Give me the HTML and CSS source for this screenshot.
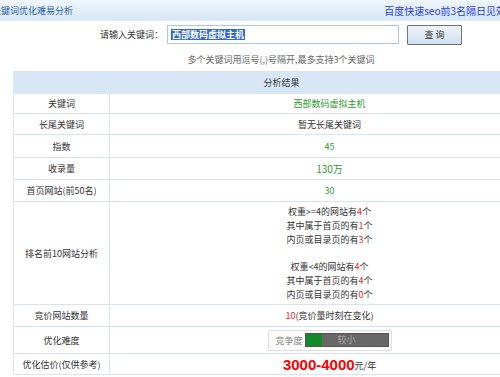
FILE: index.html
```html
<!DOCTYPE html>
<html>
<head>
<meta charset="utf-8">
<link rel="stylesheet" href="styles.css">
</head>
<body>
<div class="topbar">
  <span class="title">关键词优化难易分析</span>
  <a class="promo">百度快速seo前3名隔日见效</a>
</div>
<div class="page">
  <div class="search">
    <span class="label">请输入关键词：</span>
    <div class="input"><span class="sel">西部数码虚拟主机</span></div>
    <button class="btn">查 询</button>
  </div>
  <div class="hint">多个关键词用逗号(,)号隔开,最多支持3个关键词</div>
  <table class="result">
    <colgroup><col class="c1"><col class="c2"></colgroup>
    <tr class="head"><th colspan="2">分析结果</th></tr>
    <tr class="r1"><td class="k">关键词</td><td class="v green">西部数码虚拟主机</td></tr>
    <tr class="r2"><td class="k">长尾关键词</td><td class="v">暂无长尾关键词</td></tr>
    <tr class="r3"><td class="k">指数</td><td class="v green">45</td></tr>
    <tr class="r4"><td class="k">收录量</td><td class="v green">130万</td></tr>
    <tr class="r5"><td class="k">首页网站(前50名)</td><td class="v green">30</td></tr>
    <tr class="r6"><td class="k">排名前10网站分析</td><td class="v lines">
      <div>权重&gt;=4的网站有<span class="red">4</span>个</div>
      <div>其中属于首页的有<span class="red">1</span>个</div>
      <div>内页或目录页的有<span class="red">3</span>个</div>
      <div class="blank"></div>
      <div>权重&lt;4的网站有<span class="red">4</span>个</div>
      <div>其中属于首页的有<span class="red">4</span>个</div>
      <div>内页或目录页的有<span class="red">0</span>个</div>
    </td></tr>
    <tr class="r7"><td class="k">竞价网站数量</td><td class="v"><span class="red">10</span>(竞价量时刻在变化)</td></tr>
    <tr class="r8"><td class="k">优化难度</td><td class="v">
      <div class="meter"><span class="mlabel">竞争度</span><div class="bar"><div class="fill"></div><span class="btext">较小</span></div></div>
    </td></tr>
    <tr class="r9"><td class="k">优化估价(仅供参考)</td><td class="v"><span class="price">3000-4000</span>元/年</td></tr>
  </table>
</div>
</body>
</html>
```
FILE: styles.css
```css
html, body {
  margin: 0;
  padding: 0;
  overflow: hidden;
  background: #fff;
}
body {
  font-family: "Noto Sans CJK SC", "Liberation Sans", sans-serif;
  font-size: 9px;
  color: #333;
  width: 500px;
  height: 377px;
}
.topbar {
  height: 20px;
  display: flex;
  align-items: center;
  justify-content: space-between;
  background: linear-gradient(#f0f6fc, #d5e6f5);
  border-bottom: 1px solid #e3edf7;
  white-space: nowrap;
  overflow: hidden;
}
.title {
  margin-left: -8px;
  font-size: 9px;
  color: #2b5ca8;
}
.promo {
  font-size: 10px;
  color: #2a3fe0;
  margin-right: -6px;
}
.page {
  width: 562px;
}
.search {
  display: flex;
  align-items: center;
  justify-content: center;
  margin-top: 3px;
  height: 21px;
}
.label {
  width: 67px;
  color: #333;
}
.input {
  box-sizing: border-box;
  width: 232px;
  height: 19px;
  border: 1px solid #a9c8e4;
  display: flex;
  align-items: center;
  padding-left: 3px;
}
.sel {
  background: #3068cf;
  color: #fff;
  font-weight: bold;
  line-height: 11px;
  padding: 0 1px;
}
.btn {
  box-sizing: border-box;
  width: 55px;
  height: 20px;
  margin-left: 8px;
  border: 1px solid #6f7277;
  border-radius: 1px;
  background: linear-gradient(#eef4fa, #cfe0ef);
  font-family: inherit;
  font-size: 9px;
  color: #333;
  padding: 0;
}
.hint {
  text-align: center;
  color: #666;
  margin-top: 8px;
  height: 14px;
  line-height: 14px;
}
.result {
  margin: 4px 0 0 13px;
  width: 536px;
  border-collapse: collapse;
  table-layout: fixed;
}
.result .c1 { width: 96px; }
.result .c2 { width: 440px; }
.result th, .result td {
  border: 1px solid #d6e5f3;
  padding: 0;
  text-align: center;
  font-weight: normal;
  vertical-align: middle;
}
.result .head th {
  background: #d7e7f6;
  height: 21px;
  color: #333;
}
.r1 td { height: 19px; }
.r2 td { height: 20px; }
.r3 td { height: 22px; }
.r4 td { height: 21px; }
.r5 td { height: 21px; }
.r6 td { height: 102px; }
.r7 td { height: 21px; }
.r8 td { height: 26px; }
.r9 td { height: 20px; }
.green { color: #2f9a2f; }
.red { color: #f0222a; }
.r4 .v { font-size: 10px; }
.lines div {
  line-height: 14px;
  height: 14px;
}
.lines .blank { height: 13px; }
.meter {
  display: inline-flex;
  align-items: center;
  box-sizing: border-box;
  width: 124px;
  height: 21px;
  border: 1px solid #dedede;
  border-radius: 2px;
  background: #fafafa;
  padding-left: 5px;
  vertical-align: middle;
}
.mlabel {
  color: #888;
  width: 31px;
}
.bar {
  position: relative;
  box-sizing: border-box;
  width: 84px;
  height: 14px;
  background: #676767;
  border: 1px solid #555;
  display: flex;
}
.fill {
  width: 16px;
  background: #15892a;
}
.btext {
  position: absolute;
  left: 0;
  right: 0;
  top: 0;
  line-height: 12px;
  text-align: center;
  color: #a9a9a9;
}
.price {
  font-family: "Liberation Sans", sans-serif;
  font-size: 15px;
  font-weight: bold;
  color: #f00;
  vertical-align: -1px;
}
```
